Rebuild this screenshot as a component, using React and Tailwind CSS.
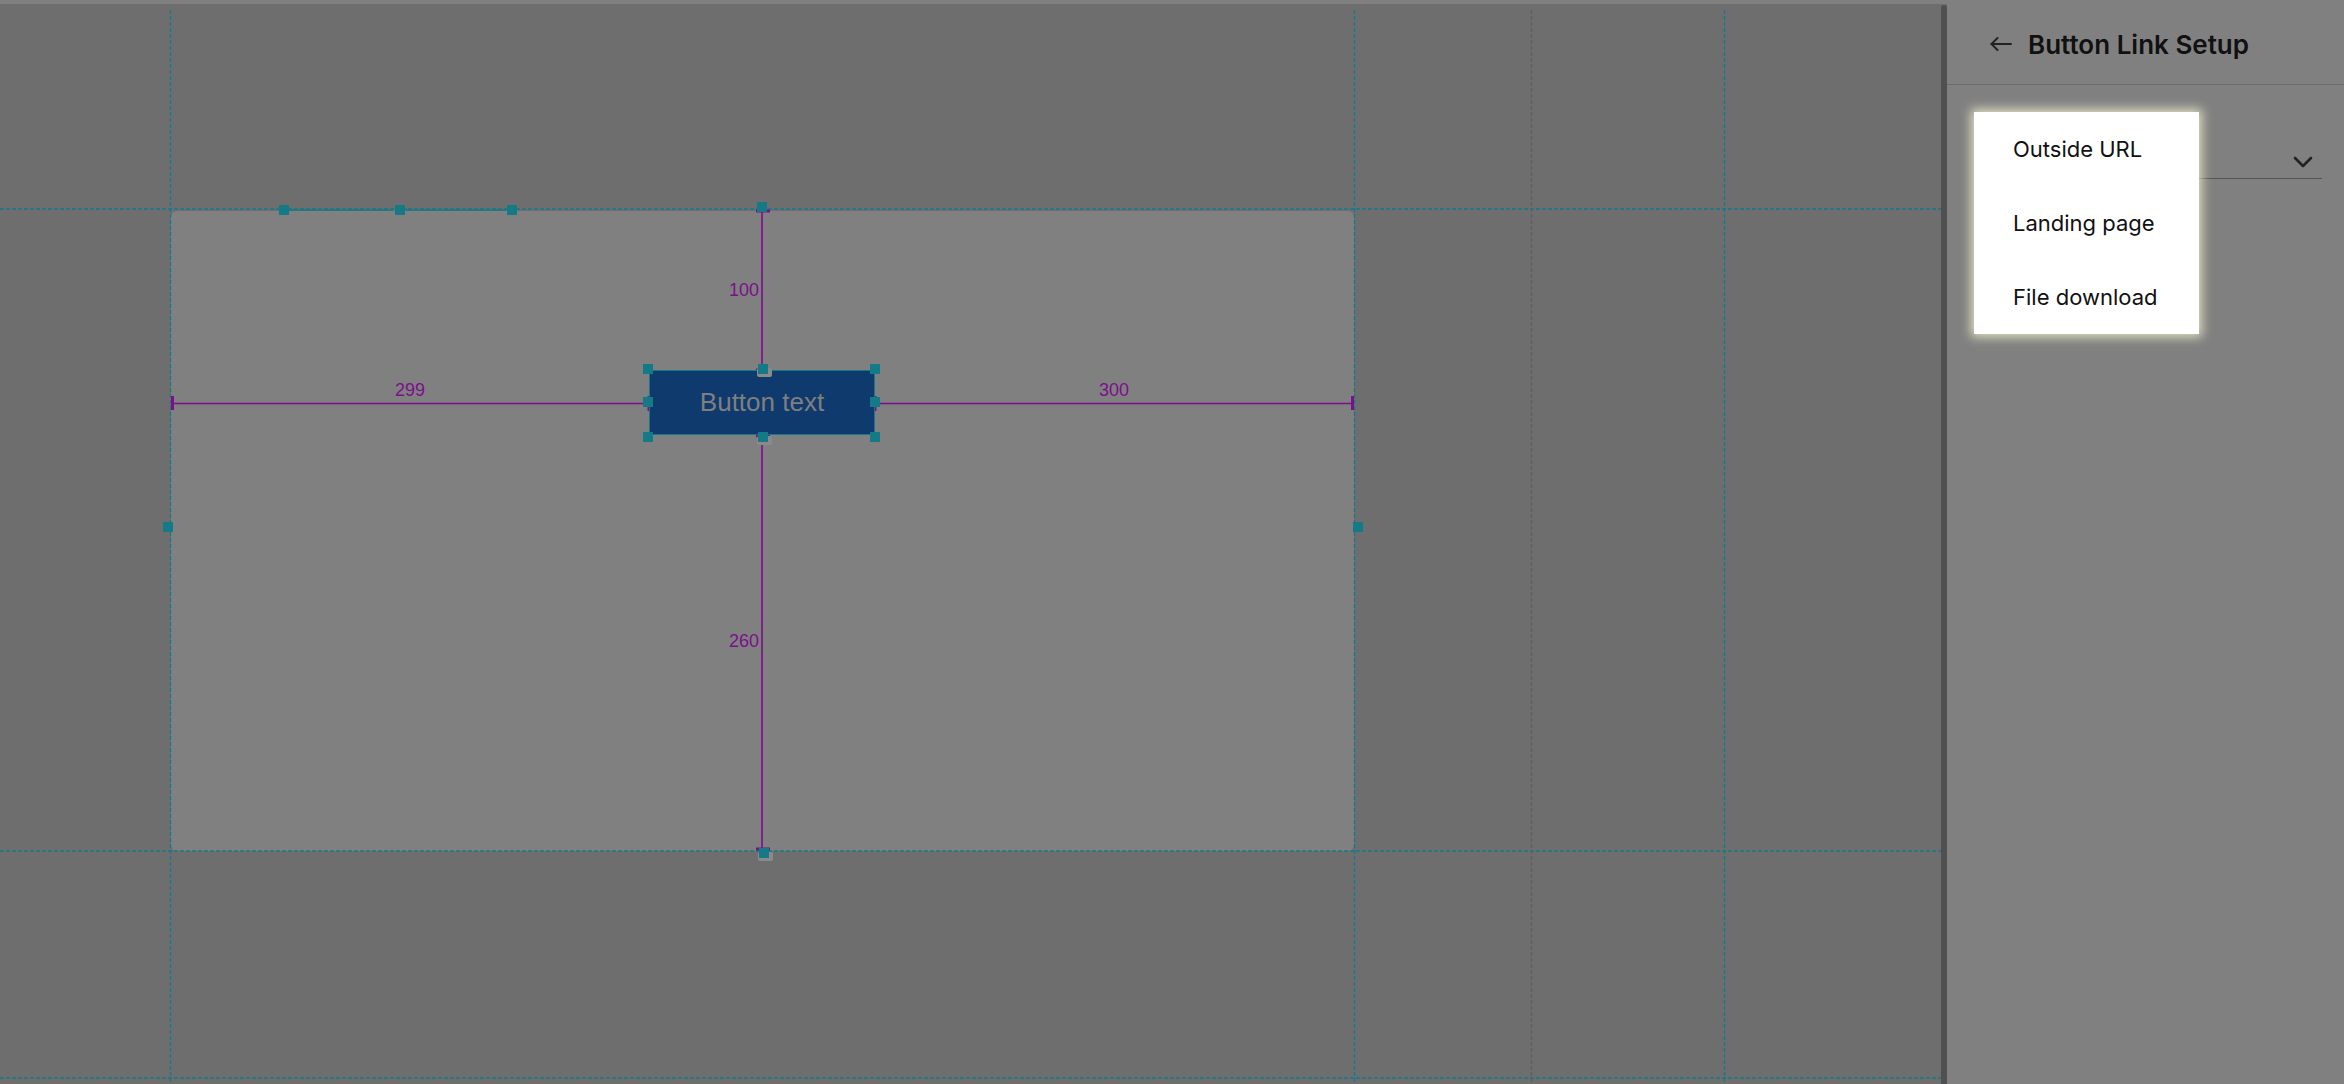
import React from "react";

const TEAL = "#157a88";
const PURPLE = "#7c0f8c";

function Handle({ x, y, boxed }) {
  return (
    <div className="absolute" style={{ left: x, top: y }}>
      {boxed && (
        <div className="absolute -left-[1px] top-[4px] h-[9px] w-[15px] rounded-[2px] bg-[#8a8a8a]" />
      )}
      <div className="absolute left-0 top-0 h-[10px] w-[10px] bg-[#157a88]" />
    </div>
  );
}

function Label({ x, y, children }) {
  return (
    <div
      className="absolute -translate-x-1/2 -translate-y-1/2 text-[18px] leading-none text-[#7c0f8c] font-['Liberation_Sans',Arial,sans-serif]"
      style={{ left: x, top: y }}
    >
      {children}
    </div>
  );
}

function Canvas() {
  return (
    <div className="relative flex-1 overflow-hidden bg-[#6e6e6e]">
      {/* artboard */}
      <div className="absolute left-[171px] top-[207px] h-[640px] w-[1183px] rounded-[6px] bg-[#808080]" />

      {/* guides + measurements */}
      <svg className="absolute left-0 top-0" width="1941" height="1080">
        <g stroke={TEAL} strokeWidth="1.3" strokeDasharray="4 2">
          <line x1="0" y1="205" x2="1941" y2="205" />
          <line x1="0" y1="847" x2="1941" y2="847" />
          <line x1="0" y1="1074" x2="1941" y2="1074" />
          <line x1="170.5" y1="6" x2="170.5" y2="1080" />
          <line x1="1354.5" y1="6" x2="1354.5" y2="1080" />
          <line x1="1724.5" y1="6" x2="1724.5" y2="1080" />
        </g>
        <line x1="1531.5" y1="6" x2="1531.5" y2="1080" stroke="#5e5e5e" strokeWidth="1.3" strokeDasharray="4 2" />
        <g stroke={TEAL} strokeWidth="1.5">
          <line x1="289" y1="206" x2="393" y2="206" />
          <line x1="406" y1="206" x2="506" y2="206" />
        </g>
        <g stroke={PURPLE} strokeWidth="1.6">
          <line x1="762" y1="204" x2="762" y2="366" />
          <line x1="762" y1="431" x2="762" y2="847" />
          <line x1="172" y1="399.5" x2="649" y2="399.5" />
          <line x1="875" y1="399.5" x2="1353" y2="399.5" />
        </g>
        <g stroke={PURPLE} strokeWidth="3">
          <line x1="756" y1="207" x2="770" y2="207" />
          <line x1="756" y1="366" x2="770" y2="366" />
          <line x1="756" y1="432" x2="770" y2="432" />
          <line x1="756" y1="845" x2="770" y2="845" />
          <line x1="172.5" y1="392" x2="172.5" y2="406" />
          <line x1="1352.5" y1="392" x2="1352.5" y2="406" />
          <line x1="649" y1="392" x2="649" y2="407" />
          <line x1="875" y1="392" x2="875" y2="407" />
        </g>
      </svg>

      <Label x={744} y={286}>100</Label>
      <Label x={744} y={637}>260</Label>
      <Label x={410} y={386}>299</Label>
      <Label x={1114} y={386}>300</Label>

      {/* button element */}
      <div className="absolute left-[649px] top-[366px] flex h-[65px] w-[226px] items-center justify-center border border-[#157a88] bg-[#0e3a6e] font-['Liberation_Sans',Arial,sans-serif] text-[26px] text-[#7f7f7f]">
        Button text
      </div>

      {/* handles */}
      <Handle x={279} y={201} />
      <Handle x={395} y={201} />
      <Handle x={507} y={201} />
      <Handle x={757} y={198} />
      <Handle x={163} y={518} />
      <Handle x={1353} y={518} />
      <Handle x={759} y={844} boxed />

      <Handle x={643} y={360} />
      <Handle x={870} y={360} />
      <Handle x={643} y={428} />
      <Handle x={870} y={428} />
      <Handle x={758} y={360} boxed />
      <Handle x={758} y={428} boxed />
      <Handle x={643} y={393} />
      <Handle x={870} y={393} />
    </div>
  );
}

function Panel() {
  const options = ["Outside URL", "Landing page", "File download"];
  return (
    <div className="relative flex w-[397px] flex-col bg-[#808080] font-['Inter','Noto_Sans',sans-serif] text-[#111]">
      <div className="flex h-[81px] items-center gap-[16px] border-b border-[#6c6c6c] pl-[43px]">
        <svg width="22" height="14" viewBox="0 0 22 14" fill="none" stroke="#222" strokeWidth="2" strokeLinecap="round" strokeLinejoin="round">
          <path d="M21 7H1.5" />
          <path d="M7.5 1L1.5 7l6 6" />
        </svg>
        <span className="text-[26px] font-semibold">Button Link Setup</span>
      </div>

      <div className="pl-[27px] pr-[22px] pt-[60px]">
        <div className="flex h-[34px] items-center justify-end border-b border-[#555] pr-[9px]">
          <svg width="20" height="12" viewBox="0 0 20 12" fill="none" stroke="#222" strokeWidth="2.6" strokeLinecap="round" strokeLinejoin="round">
            <path d="M2 2l8 8 8-8" />
          </svg>
        </div>
      </div>

      <div className="absolute left-[27px] top-[108px] flex w-[225px] flex-col bg-white shadow-[0_0_10px_3px_rgba(255,255,215,0.75)]">
        {options.map((o) => (
          <div key={o} className="flex h-[74px] items-center pl-[39px] text-[22px] text-[#111]">
            {o}
          </div>
        ))}
      </div>
    </div>
  );
}

export default function App() {
  return (
    <div className="flex h-[1084px] w-[2344px] flex-col overflow-hidden bg-[#6e6e6e]">
      <div className="h-[4px] shrink-0 bg-[#808080]" />
      <div className="flex flex-1">
        <Canvas />
        <div className="mt-[1px] w-[6px] rounded-t-[3px] bg-[#505050]" />
        <Panel />
      </div>
    </div>
  );
}
